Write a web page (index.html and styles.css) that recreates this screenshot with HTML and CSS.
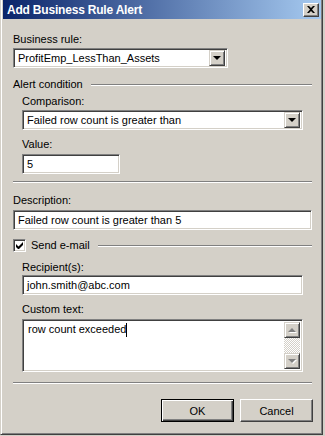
FILE: index.html
```html
<!DOCTYPE html>
<html lang="en">
<head>
  <meta charset="UTF-8" />
  <meta name="viewport" content="width=device-width, initial-scale=1.0" />
  <title>Add Business Rule Alert</title>
  <link rel="stylesheet" href="styles.css">
</head>
<body>

  <div class="window">

    <!-- Title bar -->
    <div class="titlebar">
      <span class="title">Add Business Rule Alert</span>
      <span class="close">
        <svg width="8" height="7" viewBox="0 0 8 7"><path d="M0 0h2l2 2 2-2h2L5 3.5 8 7H6L4 5 2 7H0l3-3.5z" fill="#000"/></svg>
      </span>
    </div>

    <div class="content">
      <div class="label">Business rule:</div>
      <div class="combo combo-rule">
        <span class="combo-text">ProfitEmp_LessThan_Assets</span>
        <span class="drop"><i class="arrow"></i></span>
      </div>

      <!-- Alert condition -->
      <div class="group-head">
        <span>Alert condition</span>
        <i class="etch"></i>
      </div>
      <div class="indent">
        <div class="label mt-4">Comparison:</div>
        <div class="combo">
          <span class="combo-text">Failed row count is greater than</span>
          <span class="drop"><i class="arrow"></i></span>
        </div>
        <div class="label mt-8">Value:</div>
        <div class="field field-value">5</div>
      </div>

      <div class="etch sep-1"></div>

      <div class="label mt-11">Description:</div>
      <div class="field">Failed row count is greater than 5</div>

      <!-- Send e-mail -->
      <div class="group-head check-head">
        <span class="checkbox">
          <svg width="7" height="7" viewBox="0 0 7 7"><path d="M0 2v3l2 2h1l4-4V0L2.5 4.5z" fill="#000"/></svg>
        </span>
        <span>Send e-mail</span>
        <i class="etch"></i>
      </div>
      <div class="indent">
        <div class="label mt-9">Recipient(s):</div>
        <div class="field field-mail">john.smith@abc.com</div>
        <div class="label mt-8">Custom text:</div>
        <div class="memo">
          <div class="memo-text">row count exceeded<span class="caret"></span></div>
          <div class="vscroll">
            <span class="sbtn"><i class="tri-up"></i></span>
            <span class="track"></span>
            <span class="sbtn"><i class="tri-down"></i></span>
          </div>
        </div>
      </div>

      <div class="etch sep-2"></div>

      <div class="buttons">
        <button class="btn btn-default">OK</button>
        <button class="btn">Cancel</button>
      </div>
    </div>
  </div>

</body>
</html>
```

FILE: styles.css
```css
body {
  margin: 0;
  background: #d4d0c8;
  font-family: "Liberation Sans", Arial, sans-serif;
  font-size: 11px;
  color: #000;
}

.window {
  width: 323px;
  height: 435px;
  box-sizing: border-box;
  background: #d4d0c8;
  border-left: 1px solid #d4d0c8;
  border-right: 1px solid #404040;
  border-bottom: 1px solid #404040;
  box-shadow: inset 1px 0 #fff, inset -1px -1px #808080;
  padding: 0 1px 0 2px;
  display: flex;
  flex-direction: column;
}

/* title bar */
.titlebar {
  height: 19px;
  flex-shrink: 0;
  display: flex;
  align-items: center;
  justify-content: space-between;
  padding: 0 2px 0 4px;
  background: linear-gradient(to right, #0a246a, #a6caf0);
}

.title {
  color: #fff;
  font-weight: bold;
  font-size: 12px;
  letter-spacing: -0.2px;
}

.close {
  width: 16px;
  height: 14px;
  box-sizing: border-box;
  display: flex;
  align-items: center;
  justify-content: center;
  background: #d4d0c8;
  border: 1px solid;
  border-color: #fff #404040 #404040 #fff;
  box-shadow: inset -1px -1px #808080;
}

.content {
  padding: 14px 9px 0 10px;
  display: flex;
  flex-direction: column;
}

.label {
  line-height: 13px;
  height: 13px;
}

.mt-4 { margin-top: 4px; }
.mt-8 { margin-top: 8px; }
.mt-9 { margin-top: 9px; }
.mt-11 { margin-top: 11px; }

/* sunken boxes */
.combo,
.field,
.memo {
  box-sizing: border-box;
  background: #fff;
  border: 1px solid;
  border-color: #808080 #fff #fff #808080;
  box-shadow: inset 1px 1px #404040, inset -1px -1px #d4d0c8;
}

.combo {
  height: 20px;
  margin-top: 2px;
  display: flex;
  align-items: center;
  justify-content: space-between;
  padding: 2px;
}

.combo-rule {
  width: 215px;
}

.combo-text {
  padding-left: 2px;
}

.drop,
.sbtn {
  width: 16px;
  height: 16px;
  box-sizing: border-box;
  display: flex;
  align-items: center;
  justify-content: center;
  background: #d4d0c8;
  border: 1px solid;
  border-color: #d4d0c8 #404040 #404040 #d4d0c8;
  box-shadow: inset 1px 1px #fff, inset -1px -1px #808080;
}

.arrow {
  width: 0;
  height: 0;
  border-left: 4px solid transparent;
  border-right: 4px solid transparent;
  border-top: 4px solid #000;
}

.field {
  height: 20px;
  margin-top: 3px;
  padding: 0 4px;
  line-height: 18px;
}

.field-value {
  width: 98px;
}

.field-mail {
  margin-top: 1px;
}

/* group headings with etched line */
.group-head {
  display: flex;
  align-items: center;
  gap: 8px;
  height: 13px;
  line-height: 13px;
  margin-top: 10px;
}

.etch {
  flex: 1;
  height: 0;
  border-top: 1px solid #808080;
  border-bottom: 1px solid #fff;
}

.sep-1 { flex: none; margin-top: 7px; }
.sep-2 { flex: none; margin-top: 10px; }

.check-head {
  margin-top: 9px;
  gap: 0;
}

.check-head .etch {
  margin-left: 8px;
}

.checkbox {
  width: 13px;
  height: 13px;
  box-sizing: border-box;
  margin-right: 5px;
  display: flex;
  align-items: center;
  justify-content: center;
  background: #fff;
  border: 1px solid;
  border-color: #808080 #fff #fff #808080;
  box-shadow: inset 1px 1px #404040, inset -1px -1px #d4d0c8;
}

.indent {
  margin: 0 9px 0 9px;
  display: flex;
  flex-direction: column;
}

/* multi-line text with scrollbar */
.memo {
  height: 53px;
  margin-top: 3px;
  padding: 2px;
  display: flex;
}

.memo-text {
  flex: 1;
  padding: 1px 3px;
  line-height: 13px;
}

.caret {
  display: inline-block;
  width: 1px;
  height: 14px;
  background: #000;
  vertical-align: top;
}

.vscroll {
  width: 16px;
  display: flex;
  flex-direction: column;
}

.track {
  flex: 1;
  background-color: #fff;
  background-image: repeating-conic-gradient(#d4d0c8 0 25%, #fff 0 50%);
  background-size: 2px 2px;
}

.tri-up,
.tri-down {
  width: 0;
  height: 0;
  border-left: 4px solid transparent;
  border-right: 4px solid transparent;
}

.tri-up {
  border-bottom: 4px solid #808080;
  filter: drop-shadow(1px 1px 0 #fff);
}

.tri-down {
  border-top: 4px solid #808080;
  filter: drop-shadow(1px 1px 0 #fff);
}

/* dialog buttons */
.buttons {
  display: flex;
  justify-content: flex-end;
  gap: 6px;
  margin-top: 15px;
  margin-right: -1px;
}

.btn {
  width: 73px;
  height: 23px;
  box-sizing: border-box;
  font-family: "Liberation Sans", Arial, sans-serif;
  font-size: 11px;
  color: #000;
  background: #d4d0c8;
  border: 1px solid;
  border-color: #fff #404040 #404040 #fff;
  box-shadow: inset -1px -1px #808080;
  padding: 0;
}

.btn-default {
  border: 1px solid #000;
  box-shadow: inset 1px 1px #fff, inset -1px -1px #404040, inset -2px -2px #808080;
}
```
